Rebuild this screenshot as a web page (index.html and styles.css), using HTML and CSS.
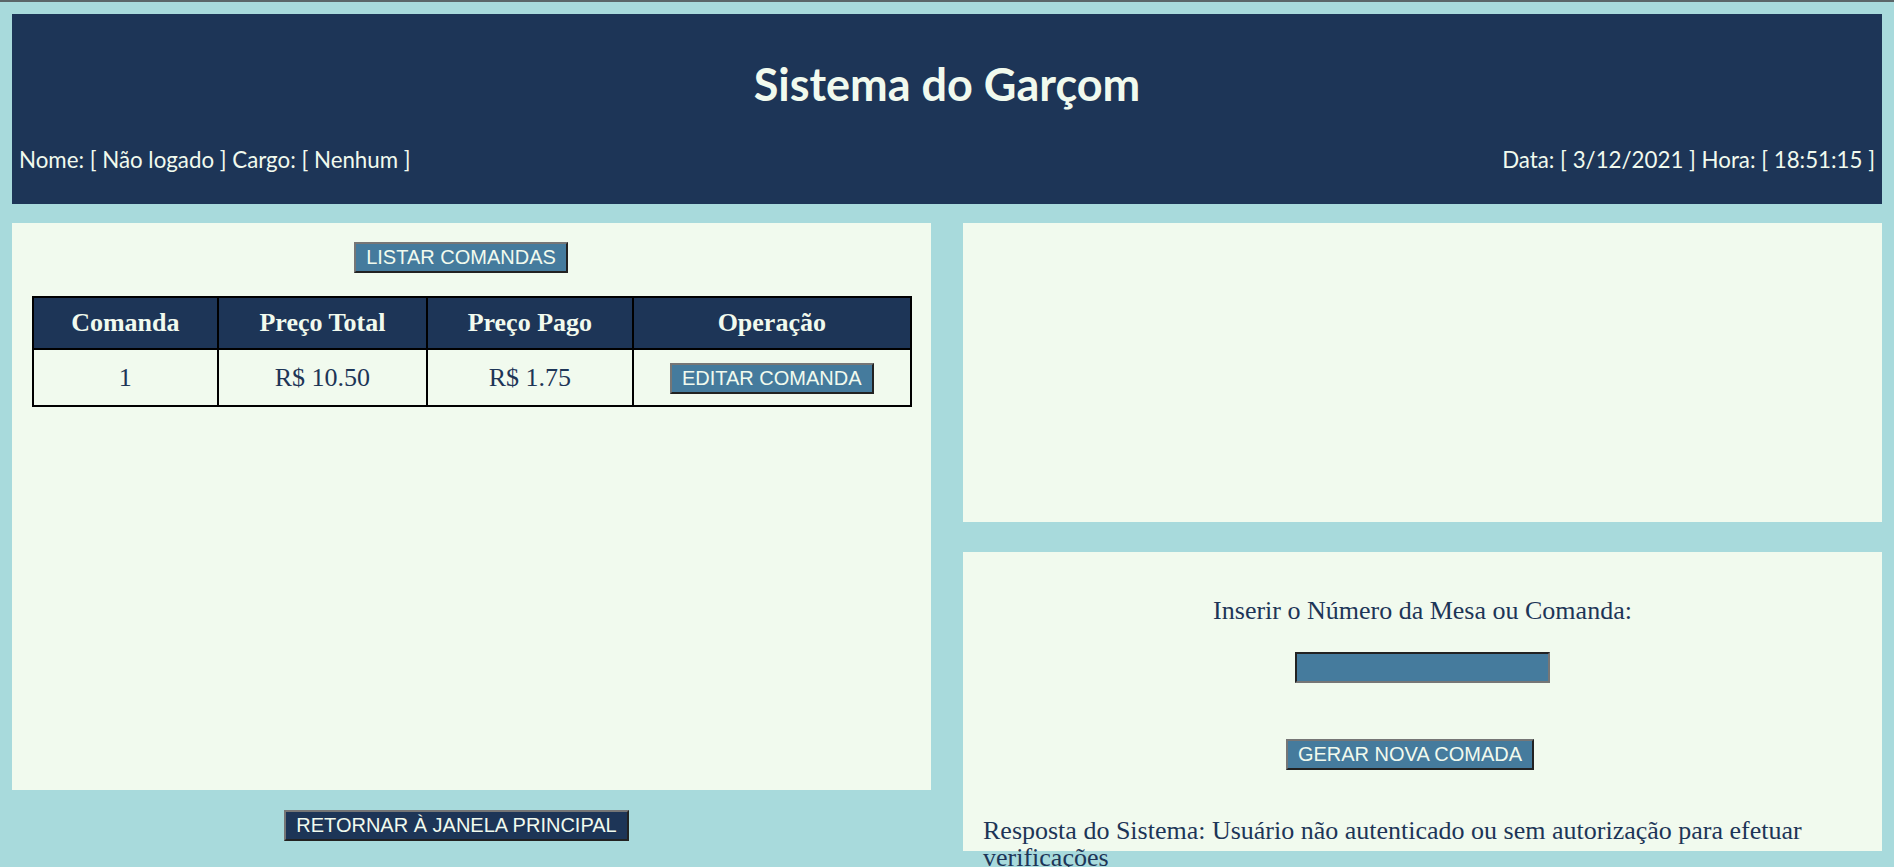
FILE: index.html
```html
<!DOCTYPE html>
<html lang="pt-BR">
<head>
<meta charset="utf-8">
<title>Sistema do Garçom</title>
<link rel="stylesheet" href="styles.css">
</head>
<body>
<div class="page">
  <header class="topbar">
    <h1 class="title">Sistema do Garçom</h1>
    <div class="info">
      <span>Nome: [ Não logado ] Cargo: [ Nenhum ]</span>
      <span>Data: [ 3/12/2021 ] Hora: [ 18:51:15 ]</span>
    </div>
  </header>
  <main class="columns">
    <section class="col-left">
      <div class="panel panel-list">
        <button class="btn btn-list" type="button">LISTAR COMANDAS</button>
        <table class="orders">
          <colgroup>
            <col class="c1"><col class="c2"><col class="c3"><col class="c4">
          </colgroup>
          <thead>
            <tr><th>Comanda</th><th>Preço Total</th><th>Preço Pago</th><th>Operação</th></tr>
          </thead>
          <tbody>
            <tr><td>1</td><td>R$ 10.50</td><td>R$ 1.75</td><td><button class="btn" type="button">EDITAR COMANDA</button></td></tr>
          </tbody>
        </table>
      </div>
      <div class="back-row">
        <button class="btn btn-dark btn-back" type="button">RETORNAR À JANELA PRINCIPAL</button>
      </div>
    </section>
    <section class="col-right">
      <div class="panel panel-empty"></div>
      <div class="panel panel-form">
        <p class="label">Inserir o Número da Mesa ou Comanda:</p>
        <input class="field" type="text">
        <button class="btn btn-new" type="button">GERAR NOVA COMADA</button>
        <p class="response">Resposta do Sistema: Usuário não autenticado ou sem autorização para efetuar verificações</p>
      </div>
    </section>
  </main>
</div>
</body>
</html>
```
FILE: styles.css
```css
* { box-sizing: border-box; }
html, body { margin: 0; }
body {
  background: #a8dadc;
  border-top: 2px solid #5b6669;
  font-family: "Liberation Serif", serif;
  color: #1d3557;
}
.page { padding: 12px 12px 48px; }

.topbar {
  background: #1d3557;
  color: #f1faee;
  font-family: Lato, "Open Sans", sans-serif;
  height: 190px;
  padding: 43px 7px 0;
  display: flex;
  flex-direction: column;
}
.title {
  margin: 0;
  font-size: 45px;
  line-height: 54px;
  font-weight: 700;
  text-align: center;
}
.info {
  display: flex;
  justify-content: space-between;
  margin-top: 36px;
  font-size: 22.3px;
  line-height: 26px;
}

.columns {
  display: grid;
  grid-template-columns: 1fr 1fr;
  column-gap: 32px;
  margin-top: 19px;
}
.panel { background: #f1faee; }

.panel-list {
  height: 567px;
  padding: 19px 19px 0 20px;
  display: flex;
  flex-direction: column;
  align-items: center;
}
.panel-list > *, .panel-form > * { flex-shrink: 0; }
.btn {
  font-family: "Liberation Sans", Arial, sans-serif;
  font-size: 20px;
  line-height: 23px;
  padding: 2px 10px;
  background: #457b9d;
  color: #f1faee;
  border: 2px solid;
  border-color: #767676 #222 #222 #767676;
  cursor: pointer;
}
.btn-dark { background: #1d3557; }
.btn-list { margin-right: 22px; }

.orders {
  margin-top: 23px;
  border-collapse: collapse;
  width: 880px;
}
.c1 { width: 185px; }
.c2 { width: 210px; }
.c3 { width: 206px; }
.c4 { width: 279px; }
.orders th, .orders td {
  border: 2px solid #000;
  text-align: center;
  padding: 0;
  font-size: 26px;
}
.orders th {
  background: #1d3557;
  color: #f1faee;
  font-weight: 700;
  height: 52px;
}
.orders td { height: 57px; }

.back-row {
  display: flex;
  justify-content: center;
  padding-top: 20px;
}
.btn-back { margin-right: 30px; }

.col-right {
  display: flex;
  flex-direction: column;
  gap: 30px;
}
.panel-empty { height: 299px; }
.panel-form {
  height: 299px;
  padding: 44px 20px 0;
  display: flex;
  flex-direction: column;
  align-items: center;
}
.label {
  margin: 0;
  font-size: 26px;
  line-height: 30px;
}
.field {
  margin-top: 26px;
  width: 255px;
  height: 31px;
  background: #457b9d;
  border: 2px solid;
  border-color: #222 #767676 #767676 #222;
}
.btn-new { margin-top: 56px; margin-right: 25px; }
.response {
  margin: 47px 0 0;
  align-self: stretch;
  text-align: left;
  font-size: 26px;
  line-height: 27px;
}
```
